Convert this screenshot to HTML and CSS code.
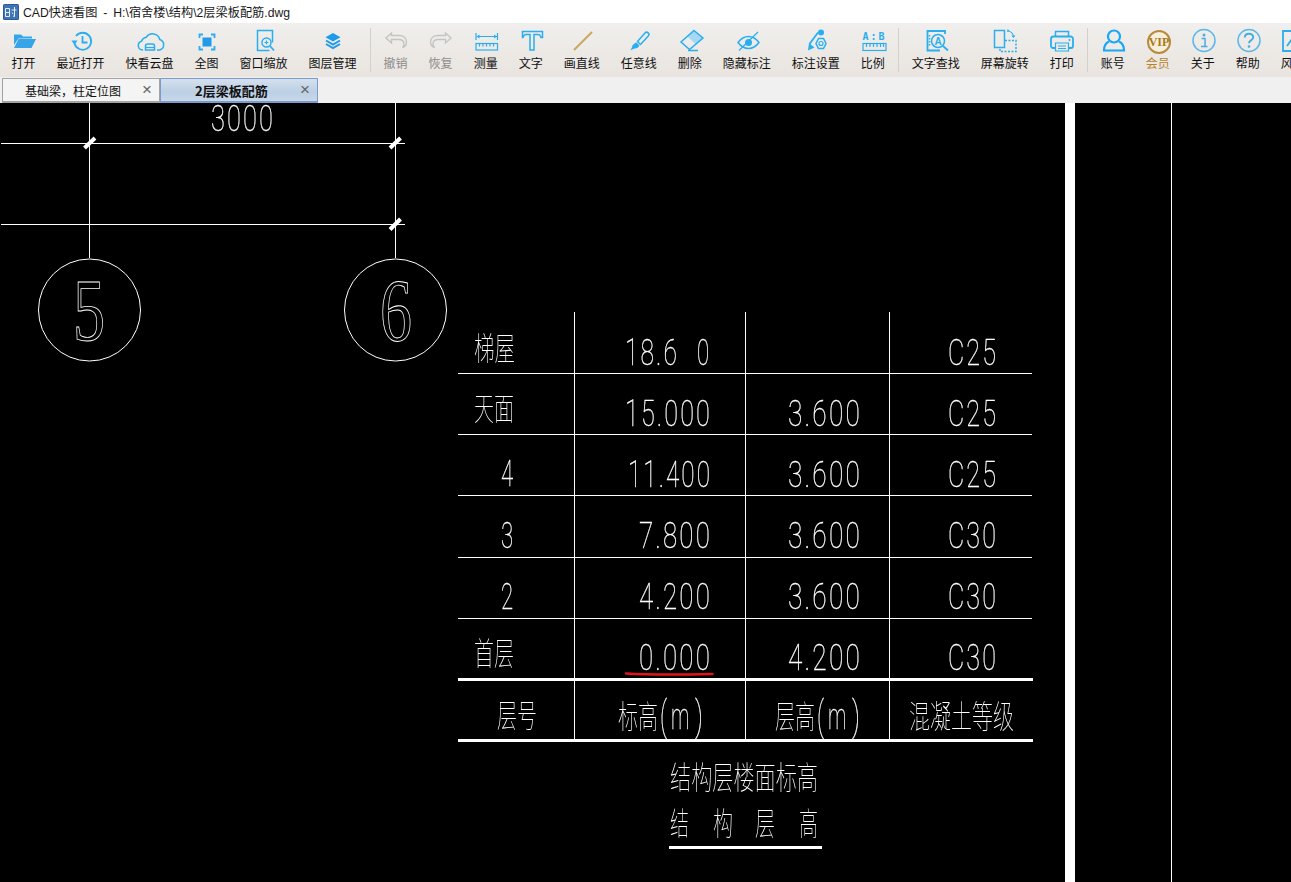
FILE: index.html
```html
<!DOCTYPE html>
<html lang="zh">
<head>
<meta charset="utf-8">
<title>CAD快速看图</title>
<link rel="stylesheet" href="styles.css">
</head>
<body>
<div class="app">
  <header class="titlebar">
    <svg class="logo" viewBox="0 0 16 16"><rect x="0" y="0" width="16" height="16" rx="1.5" fill="#2f5a96"/><rect x="1" y="1" width="14" height="14" fill="#3f74b4"/><path d="M2.500 4.500h4v8h-4zM2.500 8.500h4M8.500 6h5M11.500 3v9.500l-1.500-.5M9 8.500l1 1.500" fill="none" stroke="#e6eef8" stroke-width="1"/></svg>
    <span class="title-text">CAD快速看图 - H:\宿舍楼\结构\2层梁板配筋.dwg</span>
  </header>

  <nav class="toolbar">
    <div class="tool"><svg class="ico" viewBox="0 0 30 30"><path d="M5 8.500h7l2 2h9v2H9.500L5 19z" fill="#35a5e8"/><path d="M5 22h17.500l4.500-9H9.500z" fill="#35a5e8"/></svg><span>打开</span></div>
    <div class="tool"><svg class="ico" viewBox="0 0 30 30"><path d="M10 10a8.500 8.500 0 1 1-1.500 7.500" class="ln2"/><path d="M5.500 14.500h6l-3 4.500z" fill="#29aef0"/><path d="M16.500 10v6.500h5" class="ln2"/></svg><span>最近打开</span></div>
    <div class="tool"><svg class="ico" viewBox="0 0 30 30"><path d="M8 24h-.5a4.500 4.500 0 0 1-1-8.800 6 6 0 0 1 4.800-4 7.500 7.500 0 0 1 13.500 2.300 5.500 5.500 0 0 1 0 10.500H22" class="ln15"/><path d="M10.500 24v-4a2 2 0 0 1 2-2h5a2 2 0 0 1 2 2v4z" class="ln15"/><path d="M10.500 21.500h9" class="ln"/></svg><span>快看云盘</span></div>
    <div class="tool"><svg class="ico" viewBox="0 0 30 30"><path d="M7.500 12V8.500H11M19 8.500h3.500V12M22.500 20v3.500H19M11 23.500H7.500V20" class="ln2"/><rect x="10.500" y="11.500" width="9" height="9" fill="#1f9bea"/></svg><span>全图</span></div>
    <div class="tool"><svg class="ico" viewBox="0 0 30 30"><path d="M20.500 24.500H8.500V4.500h15v12" class="ln15"/><circle cx="17.500" cy="16.500" r="4.500" class="ln15"/><path d="M21 20l4 4.500" class="ln2"/><path d="M15.500 16.500h4M17.500 14.500v4" class="ln"/></svg><span>窗口缩放</span></div>
    <div class="tool"><svg class="ico" viewBox="0 0 30 30"><path d="M15 7l7.500 4.200L15 15.500l-7.500-4.300z" fill="#1f9bea"/><path d="M8 14.500l7 4 7-4M8 18l7 4 7-4" fill="none" stroke="#1f9bea" stroke-width="2"/></svg><span>图层管理</span></div>
    <i class="sep"></i>
    <div class="tool off"><svg class="ico" viewBox="0 0 30 30"><path d="M10.500 7l-5.500 5 5.500 5v-3.500h7c3.500 0 5.500 2 5.500 4.500 0 1.500-.5 2.500-1.500 3.500 3-1 4-3.500 4-5.500 0-4-3-6.500-7.500-6.500H10.500z" class="gr"/></svg><span>撤销</span></div>
    <div class="tool off"><svg class="ico" viewBox="0 0 30 30"><path d="M19.500 7l5.500 5-5.500 5v-3.500h-7C9 13.500 7 15.500 7 18c0 1.500.5 2.500 1.500 3.500-3-1-4-3.500-4-5.500 0-4 3-6.500 7.500-6.500h7.500z" class="gr"/></svg><span>恢复</span></div>
    <div class="tool"><svg class="ico" viewBox="0 0 30 30"><path d="M5 7v7M26.500 7v7M6 10.500h20" class="ln"/><path d="M5.500 10.500l3-2v4zM26 10.500l-3-2v4z" fill="#29aef0"/><rect x="5" y="17.500" width="21.500" height="6.500" class="ln"/><path d="M8.500 17.500v3M12 17.500v3M15.500 17.500v3M19 17.500v3M22.500 17.500v3" class="ln"/></svg><span>测量</span></div>
    <div class="tool"><svg class="ico" viewBox="0 0 30 30"><path d="M6.500 5.500h20v6H25c-.5-2-1-3-3-3h-4v15.500h-4V8.500h-4c-2 0-2.500 1-3 3H6.500z" class="ln15"/></svg><span>文字</span></div>
    <div class="tool"><svg class="ico" viewBox="0 0 30 30"><path d="M7 24L25 6" fill="none" stroke="#c9a75e" stroke-width="2"/></svg><span>画直线</span></div>
    <div class="tool"><svg class="ico" viewBox="0 0 30 30"><path d="M13.500 15.500L21 7a2.200 2.200 0 0 1 3.300 3L16.500 18.500z" class="ln15"/><path d="M12.500 16.500l3 3c-1 2-3 3.200-5 3l-4 1.800 1.500-3c0-2 2-4 4.500-4.800z" fill="#29aef0"/></svg><span>任意线</span></div>
    <div class="tool"><svg class="ico" viewBox="0 0 30 30"><path d="M19 4.500l9 7.500-7 6.500-8.500-8z" class="hatch"/><path d="M19 4.500L28 12 14.500 23.500 6 16z" class="ln15"/><path d="M13 24.500h10" class="ln15"/></svg><span>删除</span></div>
    <div class="tool"><svg class="ico" viewBox="0 0 30 30"><path d="M6 16.500c3-4 6.500-6 10.500-6s7.500 2 10.500 6c-3 4-6.500 6-10.500 6s-7.500-2-10.500-6z" class="ln15"/><circle cx="16.500" cy="16.500" r="3.500" fill="#29aef0"/><path d="M7 24.500L26 6" class="ln"/></svg><span>隐藏标注</span></div>
    <div class="tool"><svg class="ico" viewBox="0 0 30 30"><path d="M8.500 18L17 6.500" class="ln2"/><circle cx="20" cy="6.500" r="3" fill="#29aef0"/><path d="M7 24.500l1-7.500 5.500 4.500z" fill="#29aef0"/><path d="M17.500 12.500h5l2.500 5-2.500 5h-5l-2.500-5z" class="ln15"/><circle cx="20" cy="17.500" r="2" class="ln"/></svg><span>标注设置</span></div>
    <div class="tool"><svg class="ico" viewBox="0 0 30 30"><text x="16.500" y="13.500" class="ab">A:B</text><rect x="5" y="17.500" width="23" height="7" class="ln"/><path d="M8.500 17.500v3.500M12 17.500v3.500M15.500 17.500v3.500M19 17.500v3.500M22.500 17.500v3.500M25.500 17.500v3.500" class="ln"/></svg><span>比例</span></div>
    <i class="sep"></i>
    <div class="tool"><svg class="ico" viewBox="0 0 30 30"><path d="M19 24.500H6.500V5H24v3" class="ln2"/><path d="M8.500 9v12" class="dots"/><circle cx="17" cy="15" r="6.500" class="ln15"/><path d="M22 20l5 4.500" class="ln2"/><text x="17" y="18.500" class="aa">A</text></svg><span>文字查找</span></div>
    <div class="tool"><svg class="ico" viewBox="0 0 30 30"><rect x="4.500" y="4.500" width="10" height="17" class="ln15"/><path d="M15 14.500h11v11H10v-3.500" class="dash"/><path d="M17 5c3 0 6 1 6.500 6" class="ln"/><path d="M17.500 3l2 1.500-2 1.500zM21.500 9.500h4l-2 2.500z" fill="#29aef0"/></svg><span>屏幕旋转</span></div>
    <div class="tool"><svg class="ico" viewBox="0 0 30 30"><path d="M8.500 11V5.500h13V11" class="ln15"/><path d="M8.500 22H6a2 2 0 0 1-2-2v-7a2.500 2.500 0 0 1 2.500-2.500h17A2.500 2.500 0 0 1 26 13v7a2 2 0 0 1-2 2h-2.500" class="ln2"/><path d="M8.500 17h13v8h-13zM11 20h8M11 22.500h8" class="ln"/><circle cx="22.500" cy="14" r="1" fill="#29aef0"/></svg><span>打印</span></div>
    <i class="sep"></i>
    <div class="tool"><svg class="ico" viewBox="0 0 30 30"><circle cx="16" cy="10.500" r="6" class="ln3"/><path d="M11 15.500C7.500 17 6 21 6 24.500h20c0-3.500-1.500-7.500-5-9" class="ln3"/></svg><span>账号</span></div>
    <div class="tool vip"><svg class="ico" viewBox="0 0 30 30"><circle cx="16" cy="16" r="11" fill="#f6efdc" stroke="#b88a3e" stroke-width="2"/><text x="16" y="20" class="viptxt">VIP</text></svg><span>会员</span></div>
    <div class="tool"><svg class="ico" viewBox="0 0 30 30"><circle cx="16" cy="14.500" r="11" class="cir"/><circle cx="16" cy="9" r="1.500" fill="#47ade3"/><path d="M13.500 12.500H17v8M13 20.500h6.500" fill="none" stroke="#47ade3" stroke-width="1.500"/></svg><span>关于</span></div>
    <div class="tool"><svg class="ico" viewBox="0 0 30 30"><circle cx="16" cy="14.500" r="11" class="cir"/><path d="M11.800 11.500c0-2.500 2-3.800 4.200-3.800s4.200 1.300 4.200 3.500c0 3.300-4.200 3-4.200 6" fill="none" stroke="#47ade3" stroke-width="2"/><circle cx="16" cy="20.500" r="1.300" fill="#47ade3"/></svg><span>帮助</span></div>
    <div class="tool"><svg class="ico" viewBox="0 0 30 30"><path d="M18 5H5v20h19V12" class="ln2"/><path d="M9 20l5-7 3 3" class="ln2"/></svg><span>风格</span></div>
  </nav>

  <div class="tabs">
    <div class="tab"><span class="tab-label">基础梁，柱定位图</span><span class="tab-x">×</span></div>
    <div class="tab active"><span class="tab-label">2层梁板配筋</span><span class="tab-x">×</span></div>
  </div>

  <main class="canvas">
    <svg class="drawing" viewBox="0 103 1291 779" width="1291" height="779">
      <!-- axis grid -->
      <path class="t" d="M89.500 103V258M395.500 103V258M1 143.500H405M1 224.500H405"/>
      <path class="tick" d="M84.500 148L95 138M390 148L400.500 138M390 229.500L400.500 219"/>
      <circle class="t" cx="89.500" cy="310" r="51"/>
      <circle class="t" cx="395.500" cy="310" r="51"/>

      <!-- edge rails -->
      <rect class="w" x="1065" y="103" width="10" height="779"/>
      <path class="t" d="M1171.500 103V882"/>

      <!-- table rules -->
      <path class="t" d="M574.500 312V740M745.500 312V740M889.500 312V740M458 373.500H1032M458 434.500H1032M458 495.500H1032M458 557.500H1032M458 618.500H1032"/>
      <rect class="w" x="458" y="678" width="575" height="3"/>
      <rect class="w" x="458" y="739" width="575" height="3"/>
      <rect class="w" x="669" y="846" width="153" height="3"/>

      <g class="labels">
        <text class="lat" x="211" y="131" textLength="64" lengthAdjust="spacingAndGlyphs">3000</text>
        <text class="axis" x="73" y="340" textLength="32" lengthAdjust="spacingAndGlyphs">5</text>
        <text class="axis" x="380" y="340" textLength="32" lengthAdjust="spacingAndGlyphs">6</text>

        <!-- first column -->
        <text class="cjk" x="474" y="360" textLength="41" lengthAdjust="spacingAndGlyphs">梯屋</text>
        <text class="cjk" x="474" y="420" textLength="40" lengthAdjust="spacingAndGlyphs">天面</text>
        <text class="lat" x="501" y="486" textLength="14" lengthAdjust="spacingAndGlyphs">4</text>
        <text class="lat" x="501" y="548" textLength="14" lengthAdjust="spacingAndGlyphs">3</text>
        <text class="lat" x="501" y="609" textLength="14" lengthAdjust="spacingAndGlyphs">2</text>
        <text class="cjk" x="474" y="665" textLength="40" lengthAdjust="spacingAndGlyphs">首层</text>
        <text class="cjk" x="497" y="727" textLength="40" lengthAdjust="spacingAndGlyphs">层号</text>

        <!-- elevation -->
        <text class="lat" x="625" y="365" textLength="54" lengthAdjust="spacingAndGlyphs">18.6</text>
        <text class="lat" x="697" y="365" textLength="14" lengthAdjust="spacingAndGlyphs">0</text>
        <text class="lat" x="625" y="426" textLength="87" lengthAdjust="spacingAndGlyphs">15.000</text>
        <text class="lat" x="628" y="487" textLength="84" lengthAdjust="spacingAndGlyphs">11.400</text>
        <text class="lat" x="639" y="548" textLength="73" lengthAdjust="spacingAndGlyphs">7.800</text>
        <text class="lat" x="639" y="609" textLength="73" lengthAdjust="spacingAndGlyphs">4.200</text>
        <text class="lat" x="639" y="670" textLength="73" lengthAdjust="spacingAndGlyphs">0.000</text>
        <text class="cjk" x="618" y="728" textLength="40" lengthAdjust="spacingAndGlyphs">标高</text>
        <text class="lat paren" x="660" y="730" textLength="7" lengthAdjust="spacingAndGlyphs">(</text>
        <text class="lat" x="671" y="729" textLength="20" lengthAdjust="spacingAndGlyphs">m</text>
        <text class="lat paren" x="695" y="730" textLength="8" lengthAdjust="spacingAndGlyphs">)</text>

        <!-- storey height -->
        <text class="lat" x="788" y="426" textLength="74" lengthAdjust="spacingAndGlyphs">3.600</text>
        <text class="lat" x="788" y="487" textLength="74" lengthAdjust="spacingAndGlyphs">3.600</text>
        <text class="lat" x="788" y="548" textLength="74" lengthAdjust="spacingAndGlyphs">3.600</text>
        <text class="lat" x="788" y="609" textLength="74" lengthAdjust="spacingAndGlyphs">3.600</text>
        <text class="lat" x="788" y="670" textLength="74" lengthAdjust="spacingAndGlyphs">4.200</text>
        <text class="cjk" x="775" y="728" textLength="40" lengthAdjust="spacingAndGlyphs">层高</text>
        <text class="lat paren" x="817" y="730" textLength="7" lengthAdjust="spacingAndGlyphs">(</text>
        <text class="lat" x="828" y="729" textLength="20" lengthAdjust="spacingAndGlyphs">m</text>
        <text class="lat paren" x="852" y="730" textLength="8" lengthAdjust="spacingAndGlyphs">)</text>

        <!-- concrete grade -->
        <text class="lat" x="948" y="365" textLength="50" lengthAdjust="spacingAndGlyphs">C25</text>
        <text class="lat" x="948" y="426" textLength="50" lengthAdjust="spacingAndGlyphs">C25</text>
        <text class="lat" x="948" y="487" textLength="50" lengthAdjust="spacingAndGlyphs">C25</text>
        <text class="lat" x="948" y="548" textLength="50" lengthAdjust="spacingAndGlyphs">C30</text>
        <text class="lat" x="948" y="609" textLength="50" lengthAdjust="spacingAndGlyphs">C30</text>
        <text class="lat" x="948" y="670" textLength="50" lengthAdjust="spacingAndGlyphs">C30</text>
        <text class="cjk" x="909" y="728" textLength="105" lengthAdjust="spacingAndGlyphs">混凝土等级</text>

        <!-- caption -->
        <text class="cjk" x="670" y="789" textLength="148" lengthAdjust="spacingAndGlyphs">结构层楼面标高</text>
        <text class="cjk" x="670" y="835" textLength="19" lengthAdjust="spacingAndGlyphs">结</text>
        <text class="cjk" x="713" y="835" textLength="20" lengthAdjust="spacingAndGlyphs">构</text>
        <text class="cjk" x="755" y="835" textLength="20" lengthAdjust="spacingAndGlyphs">层</text>
        <text class="cjk" x="799" y="835" textLength="19" lengthAdjust="spacingAndGlyphs">高</text>
      </g>

      <!-- red markup -->
      <path class="mark" d="M626 673.500C650 675 690 674.500 712.500 674"/>
    </svg>
  </main>
</div>
</body>
</html>
```

FILE: styles.css
```css
html, body {
  margin: 0;
  padding: 0;
  background: #000;
}
.app {
  width: 1291px;
  height: 882px;
  display: flex;
  flex-direction: column;
  overflow: hidden;
  font-family: "Noto Sans CJK SC", "Liberation Sans", sans-serif;
}
.titlebar {
  flex: 0 0 23px;
  display: flex;
  align-items: center;
  gap: 4px;
  padding-left: 3px;
  background: #fff;
}
.logo { width: 16px; height: 16px; }
.title-text {
  font-family: "Liberation Sans", "Noto Sans CJK SC", sans-serif;
  font-size: 12.2px;
  word-spacing: 2.5px;
  color: #1a1a1a;
  white-space: nowrap;
}
.toolbar {
  flex: 0 0 54px;
  display: flex;
  align-items: stretch;
  padding-left: 1px;
  background: linear-gradient(#f0efed, #e9e4df);
  overflow: hidden;
}
.tool {
  flex: 0 0 auto;
  display: flex;
  flex-direction: column;
  align-items: center;
  padding: 3px 10.5px 0;
  font-size: 12px;
  line-height: 17px;
  color: #111;
  white-space: nowrap;
}
.tool.off { color: #8c8c8c; }
.tool.vip { color: #b9842c; }
.ico {
  display: block;
  width: 30px;
  height: 30px;
  margin: 0 -10px -2px;
}
.sep {
  flex: 0 0 1px;
  height: 44px;
  margin: 5px 2.5px 0;
  background: #d4d1cd;
}
.ln   { fill: none; stroke: #29aef0; stroke-width: 1.2; }
.ln15 { fill: none; stroke: #29aef0; stroke-width: 1.5; }
.ln2  { fill: none; stroke: #29aef0; stroke-width: 1.8; }
.ln3  { fill: none; stroke: #18a8f5; stroke-width: 2.2; }
.gr   { fill: none; stroke: #c4c4c4; stroke-width: 1.4; }
.hatch { fill: #a6d8f5; }
.dots { fill: none; stroke: #29aef0; stroke-width: 1.5; stroke-dasharray: 1.5 1.5; }
.dash { fill: none; stroke: #29aef0; stroke-width: 1.5; stroke-dasharray: 2 1.5; }
.cir  { fill: none; stroke: #5cb8e8; stroke-width: 1.5; }
.ab { font: 700 10px "DejaVu Sans Mono", monospace; fill: #29aef0; text-anchor: middle; letter-spacing: 2px; }
.aa { font: 700 10px "Liberation Sans", sans-serif; fill: #29aef0; text-anchor: middle; }
.viptxt { font: 700 12px "Liberation Serif", serif; fill: #a87a22; text-anchor: middle; }

.tabs {
  flex: 0 0 26px;
  display: flex;
  padding: 1px 0 0 2px;
  box-sizing: border-box;
  background: #f0f0f0;
}
.tab {
  width: 158px;
  box-sizing: border-box;
  display: flex;
  align-items: center;
  justify-content: space-between;
  padding: 0 7px 0 22px;
  border: 1px solid #a3a3a3;
  border-bottom-width: 2px;
  background: #f4f4f4;
  font-size: 12px;
  color: #111;
}
.tab.active {
  padding-left: 34px;
  border-color: #7b9bcb;
  background: linear-gradient(#d4e0ee, #bccfe4 60%, #c8d8ea);
  font-size: 13px;
  font-weight: 700;
}
.tab-x {
  font: 400 17px "Liberation Sans", sans-serif;
  color: #666;
}
.canvas {
  flex: 1 1 auto;
  background: #000;
  overflow: hidden;
}
.drawing { display: block; }
.labels { filter: grayscale(1) brightness(1.5); }
.t { fill: none; stroke: #fff; stroke-width: 1; }
.w { fill: #fff; }
.tick { fill: none; stroke: #fff; stroke-width: 4; }
.mark { fill: none; stroke: #e5141c; stroke-width: 2.4; stroke-linecap: round; }
.lat {
  font-family: Roboto, sans-serif;
  font-weight: 100;
  font-size: 36px;
  letter-spacing: 3px;
  fill: #fff;
  stroke: #fff;
  stroke-width: .3;
}
.paren { font-size: 40px; letter-spacing: 0; }
.cjk {
  font-family: "Noto Sans CJK SC", sans-serif;
  font-weight: 100;
  font-size: 32px;
  fill: #fff;
}
.axis {
  font-family: "Liberation Serif", serif;
  font-size: 88px;
  fill: none;
  stroke: #fff;
  stroke-width: .9;
}
```
